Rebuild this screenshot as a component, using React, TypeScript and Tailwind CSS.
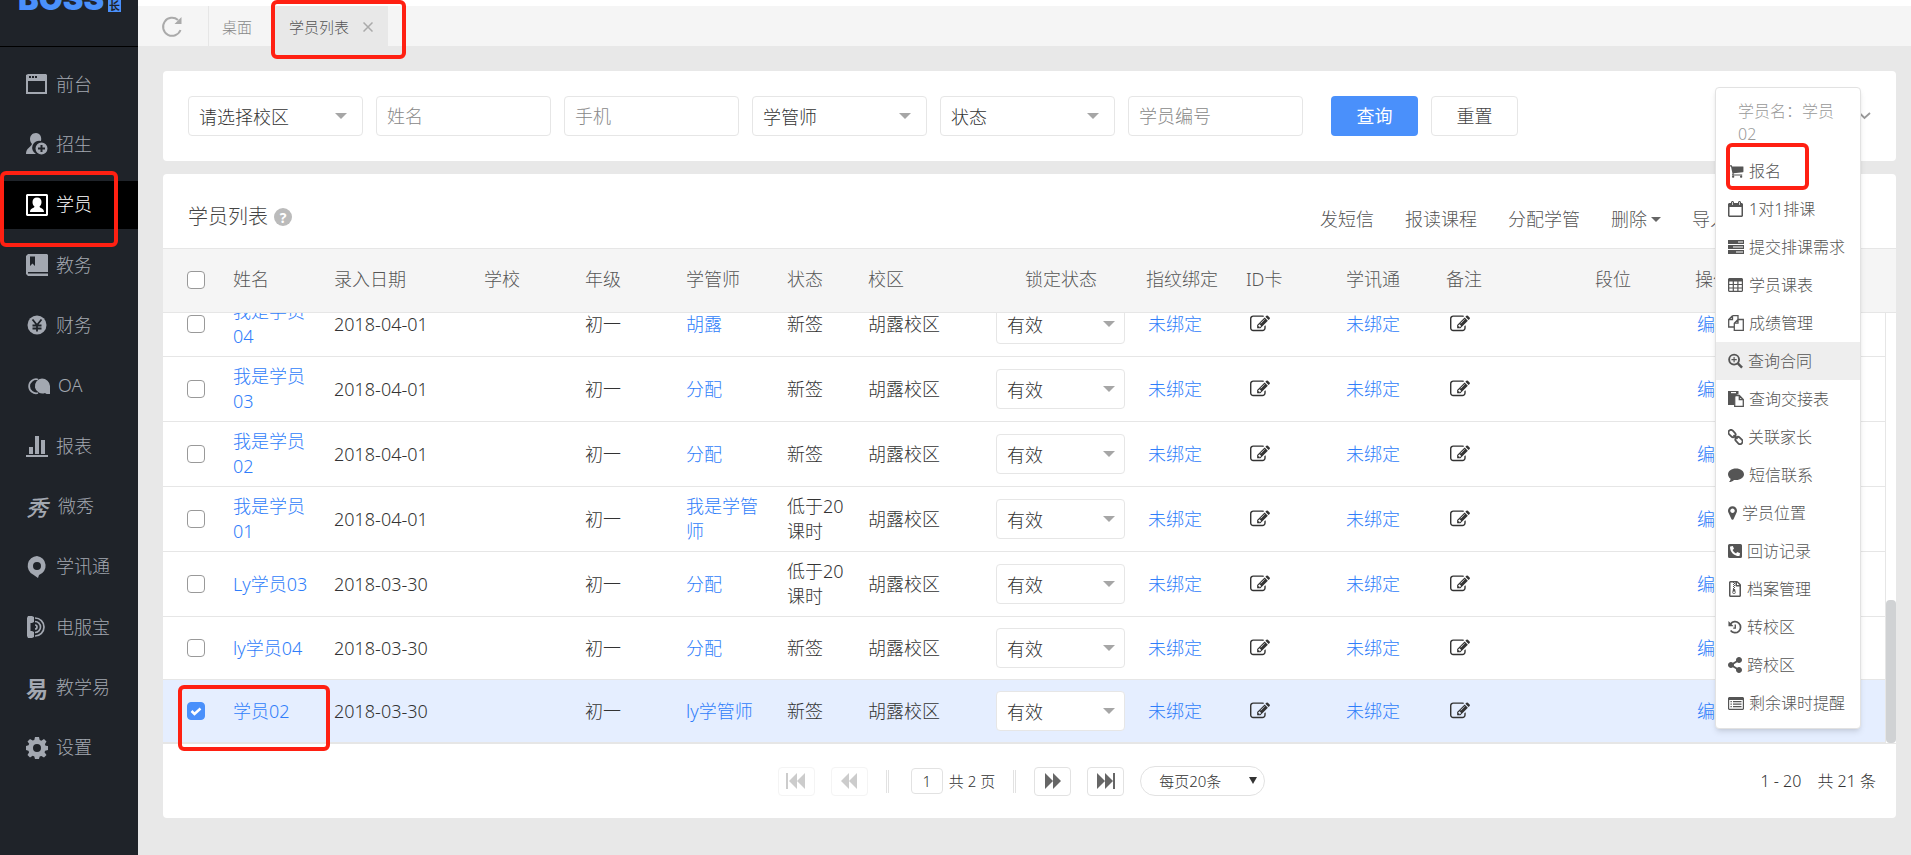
import type { ReactNode } from "react";
import { useState } from "react";
import { FaPhoneSquareAlt, FaShareAlt, FaRegFileArchive } from "react-icons/fa";

type NavItem = { label: string; icon: ReactNode };

type Student = {
  name: string;
  date: string;
  tutor: string;
  status: string;
};

const EDIT_PATH =
  "M888 1184l116-116-152-152-116 116v56h96v96h56zm440-720q-16-16-33 1l-350 350q-17 17-1 33t33-1l350-350q17-17 1-33zm80 594v190q0 119-84.5 203.5t-203.5 84.5h-832q-119 0-203.5-84.5t-84.5-203.5v-832q0-119 84.5-203.5t203.5-84.5h832q63 0 117 25 15 7 18 23 3 17-9 29l-49 49q-14 14-32 8-23-6-45-6h-832q-66 0-113 47t-47 113v832q0 66 47 113t113 47h832q66 0 113-47t47-113v-126q0-13 9-22l64-64q15-15 35-7t20 29zm-96-738l288 288-672 672h-288v-288zm444 132l-92 92-288-288 92-92q28-28 68-28t68 28l152 152q28 28 28 68t-28 68z";

const CART_PATH =
  "M704 1536q0 52-38 90t-90 38-90-38-38-90 38-90 90-38 90 38 38 90zm896 0q0 52-38 90t-90 38-90-38-38-90 38-90 90-38 90 38 38 90zm128-1088v512q0 24-16.5 42.5t-40.5 21.5l-1044 122q13 60 13 70 0 16-24 64h920q26 0 45 19t19 45-19 45-45 19h-1024q-26 0-45-19t-19-45q0-11 8-31.5t16-36 21.5-40 15.5-29.5l-177-823h-204q-26 0-45-19t-19-45 19-45 45-19h256q16 0 28.5 6.5t19.5 15.5 13 24.5 8 26 5.5 29.5 4.5 26h1201q26 0 45 19t19 45z";

const PIN_PATH =
  "M1152 640q0-106-75-181t-181-75-181 75-75 181 75 181 181 75 181-75 75-181zm256 0q0 109-33 179l-364 774q-16 33-47.5 52t-67.5 19-67.5-19-46.5-52l-365-774q-33-70-33-179 0-212 150-362t362-150 362 150 150 362z";

// navigation icons, 22px grid
function NavIcon({ children }: { children: ReactNode }) {
  return (
    <svg viewBox="0 0 22 22" className="h-[22px] w-[22px] shrink-0" fill="currentColor" aria-hidden="true">
      {children}
    </svg>
  );
}

const navItems: NavItem[] = [
  {
    label: "前台",
    icon: (
      <NavIcon>
        <path fillRule="evenodd" d="M2 1h18l1 1v19H0V2zM2 8v11h17V8zM3 3v2h2V3zm3 0v2h2V3zm3 0v2h2V3z" />
      </NavIcon>
    ),
  },
  {
    label: "招生",
    icon: (
      <NavIcon>
        <path d="M10 0c-4 0-6 3-6 6 0 2 1 4 2 5-1 3-6 4-6 10h10a7 7 0 0 1 5-13c1-4-1-8-5-8z" />
        <path fillRule="evenodd" d="M15.500 9.500a6 6 0 1 0 0 12 6 6 0 0 0 0-12zM14.500 12h2v2.500H19v2h-2.500V19h-2v-2.500H12v-2h2.500z" />
      </NavIcon>
    ),
  },
  {
    label: "学员",
    icon: (
      <NavIcon>
        <path fillRule="evenodd" d="M1 0h20l1 1v20l-1 1H1l-1-1V1zm1 2v18h18V2z" />
        <path d="M11 3.500c-3 0-4.500 2-4.500 4.500 0 2 .8 3.500 2 4.500-.5 2-4.500 1.500-4.500 5.500h14c0-4-4-3.500-4.500-5.500 1.200-1 2-2.500 2-4.500 0-2.500-1.500-4.500-4.500-4.500z" />
      </NavIcon>
    ),
  },
  {
    label: "教务",
    icon: (
      <NavIcon>
        <path fillRule="evenodd" d="M2 0h19l1 1v17H2v1.500h20V22H2l-2-2V2zM4 2.500v9.500l2.500-2.500L9 12V2.500z" />
      </NavIcon>
    ),
  },
  {
    label: "财务",
    icon: (
      <NavIcon>
        <circle cx="11" cy="11" r="9.500" />
        <path d="M6.500 5.500 11 11l4.500-5.500M11 11v6.500M6.500 11.500h9M6.500 14.500h9" fill="none" stroke="#1f2329" strokeWidth="1.800" />
      </NavIcon>
    ),
  },
  {
    label: "OA",
    icon: (
      <svg viewBox="0 0 24 22" className="h-[22px] w-6 shrink-0" aria-hidden="true">
        <path d="M12 4.500A7 7 0 1 0 12 18" fill="none" stroke="currentColor" strokeWidth="1.800" />
        <path d="M16 3.500a7.500 7.500 0 1 0 3 14.500c.8 1 2 1 5 1V11a8 8 0 0 0-8-7.500z" fill="currentColor" />
      </svg>
    ),
  },
  {
    label: "报表",
    icon: (
      <NavIcon>
        <path d="M3 12h4v7H3zM9 1h4v18H9zm6 4h4v14h-4zM0 20h22v2H0z" />
      </NavIcon>
    ),
  },
  { label: "微秀", icon: <span className="w-6 text-[22px] leading-6 font-medium italic" aria-hidden="true">秀</span> },
  {
    label: "学讯通",
    icon: (
      <NavIcon>
        <path fillRule="evenodd" d="M11 0a9.800 9.800 0 0 0-4 18.500L12 22l1-3a9.800 9.800 0 0 0-2-19zm0 6a4 4 0 1 1 0 8 4 4 0 0 1 0-8z" />
      </NavIcon>
    ),
  },
  {
    label: "电服宝",
    icon: (
      <NavIcon>
        <path d="M2 0h4l2 1v5l-2 1H4.500v8H6l2 1v5l-2 1H2l-1-2V2z" />
        <path d="M9 2a9 9 0 0 1 0 18M9 5.500a5.500 5.500 0 0 1 0 11M9 9a2 2 0 0 1 0 4" fill="none" stroke="currentColor" strokeWidth="1.700" />
      </NavIcon>
    ),
  },
  { label: "教学易", icon: <span className="w-[22px] text-[22px] leading-6 font-bold" aria-hidden="true">易</span> },
  {
    label: "设置",
    icon: (
      <NavIcon>
        <path
          fillRule="evenodd"
          d="M9 0h4l.7 3 1.600.7L18 2l2.500 2.500-1.600 2.700.7 1.600L22 9v4l-2.800.7-.7 1.600L20.500 18 18 20.500l-2.700-1.600-1.600.7L13 22H9l-.7-2.500-1.600-.7L4 20.500 1.500 18l1.600-2.700-.7-1.600L0 13V9l2.500-.7.7-1.600L1.500 4.500 4 2l2.700 1.600L8.300 3zm2 7a4 4 0 1 0 0 8 4 4 0 0 0 0-8z"
        />
      </NavIcon>
    ),
  },
];

const students: Student[] = [
  { name: "我是学员04", date: "2018-04-01", tutor: "胡露", status: "新签" },
  { name: "我是学员03", date: "2018-04-01", tutor: "分配", status: "新签" },
  { name: "我是学员02", date: "2018-04-01", tutor: "分配", status: "新签" },
  { name: "我是学员01", date: "2018-04-01", tutor: "我是学管师", status: "低于20课时" },
  { name: "Ly学员03", date: "2018-03-30", tutor: "分配", status: "低于20课时" },
  { name: "ly学员04", date: "2018-03-30", tutor: "分配", status: "新签" },
  { name: "学员02", date: "2018-03-30", tutor: "ly学管师", status: "新签" },
];

const headers = ["姓名", "录入日期", "学校", "年级", "学管师", "状态", "校区", "锁定状态", "指纹绑定", "ID卡", "学讯通", "备注", "段位", "操作"];

function Glyph({ d, className }: { d: string; className: string }) {
  return (
    <svg viewBox="0 0 1792 1792" className={className} fill="currentColor" aria-hidden="true">
      <path d={d} />
    </svg>
  );
}

function MenuGlyph({ children, className = "w-4" }: { children: ReactNode; className?: string }) {
  return (
    <svg viewBox="0 0 16 16" className={`h-4 shrink-0 ${className}`} fill="currentColor" aria-hidden="true">
      {children}
    </svg>
  );
}

const menuItems: NavItem[] = [
  { label: "报名", icon: <Glyph d={CART_PATH} className="h-4 w-4 shrink-0" /> },
  {
    label: "1对1排课",
    icon: (
      <MenuGlyph>
        <path fillRule="evenodd" d="M3 2V1l1-1h1l1 1v1h4V1l1-1h1l1 1v1h1l1 1v12l-1 1H1l-1-1V3l1-1zM1.500 6v8.500h12V6z" />
        <path d="M4.500 1v3M11.500 1v3" stroke="#fff" strokeWidth=".7" />
      </MenuGlyph>
    ),
  },
  {
    label: "提交排课需求",
    icon: (
      <MenuGlyph>
        <path d="M0 1h16v4H0zM0 6h16v4H0zM0 11h16v4H0z" />
        <path d="M10 2.500h5v1h-5zM5 7.500h10v1H5zM8 12.500h7v1H8z" fill="#fff" />
      </MenuGlyph>
    ),
  },
  {
    label: "学员课表",
    icon: (
      <MenuGlyph>
        <path
          fillRule="evenodd"
          d="M1 1h13l1 1v12l-1 1H1l-1-1V2zm.3 3.500V7h3.400V4.500zm4.600 0V7h3.400V4.500zm4.600 0V7h3.300V4.500zM1.300 8v2.500h3.400V8zm4.600 0v2.500h3.400V8zm4.600 0v2.500h3.300V8zM1.300 11.500v2.300h3.400v-2.300zm4.600 0v2.300h3.400v-2.300zm4.600 0v2.300h3.300v-2.300z"
        />
      </MenuGlyph>
    ),
  },
  {
    label: "成绩管理",
    icon: (
      <MenuGlyph>
        <path d="M4.500.7H10v4M4.500.7.700 4.500V12h5.500M4.500.7v3.800H.7M10 4.500h5.300v10.800h-9V8.200zM10 4.500v3.700H6.300" fill="none" stroke="currentColor" strokeWidth="1.300" />
      </MenuGlyph>
    ),
  },
  {
    label: "查询合同",
    icon: (
      <MenuGlyph className="w-[15px]">
        <circle cx="6.500" cy="6.500" r="5.300" fill="none" stroke="currentColor" strokeWidth="2" />
        <path d="m10.500 10.500 4.500 4.500" stroke="currentColor" strokeWidth="2.600" />
        <path d="M6.500 3.700v5.600M3.700 6.500h5.600" stroke="currentColor" strokeWidth="1.200" />
      </MenuGlyph>
    ),
  },
  {
    label: "查询交接表",
    icon: (
      <MenuGlyph>
        <path d="M0 0h10.500v3.500H9L6 7v7H0z" />
        <path d="M3 1h5v1.200H3z" fill="#fff" />
        <path d="M6.700 4.500h4.600l4 4v6.800H6.700zM11.300 4.500v4h4" fill="none" stroke="currentColor" strokeWidth="1.300" />
      </MenuGlyph>
    ),
  },
  {
    label: "关联家长",
    icon: (
      <MenuGlyph className="w-[15px]">
        <g fill="none" stroke="currentColor" strokeWidth="1.900" transform="rotate(45 8 8)">
          <rect x="-1.500" y="5.300" width="8.500" height="5.400" rx="2.700" />
          <rect x="9" y="5.300" width="8.500" height="5.400" rx="2.700" />
          <path d="M5 8h6" />
        </g>
      </MenuGlyph>
    ),
  },
  {
    label: "短信联系",
    icon: (
      <MenuGlyph>
        <path d="M8 1.500c4.500 0 8 2.600 8 5.800s-3.500 5.800-8 5.800l-2-.2C4.500 14.200 3 15 1 15c1-1 1.500-2 1.600-3.200C1 10.800 0 9.200 0 7.300c0-3.200 3.500-5.800 8-5.800z" />
      </MenuGlyph>
    ),
  },
  {
    label: "学员位置",
    icon: (
      <svg viewBox="384 0 1024 1792" className="h-4 w-[9px] shrink-0" fill="currentColor" aria-hidden="true">
        <path d={PIN_PATH} />
      </svg>
    ),
  },
  { label: "回访记录", icon: <FaPhoneSquareAlt className="h-4 w-[14px] shrink-0" /> },
  { label: "档案管理", icon: <FaRegFileArchive className="h-4 w-[14px] shrink-0" /> },
  {
    label: "转校区",
    icon: (
      <MenuGlyph className="w-[14px]">
        <path d="M3 4.500A6.300 6.300 0 1 1 3 12" fill="none" stroke="currentColor" strokeWidth="2" />
        <path d="M.5 1v6h6zM7.500 5h1.600v5H6V8.500h1.500z" />
      </MenuGlyph>
    ),
  },
  { label: "跨校区", icon: <FaShareAlt className="h-4 w-[14px] shrink-0" /> },
  {
    label: "剩余课时提醒",
    icon: (
      <MenuGlyph>
        <path fillRule="evenodd" d="M1 2h14l1 1v11l-1 1H1l-1-1V3zm.2 3v8.800h13.600V5z" />
        <path d="M2.500 6h1.300v1.200H2.500zm2.500 0h8.500v1.200H5zM2.500 8.500h1.300v1.200H2.500zm2.500 0h8.500v1.200H5zM2.500 11h1.300v1.200H2.500zM5 11h8.500v1.200H5z" />
      </MenuGlyph>
    ),
  },
];

function Marker({ className }: { className: string }) {
  return <div className={`pointer-events-none absolute z-30 rounded-md border-4 border-[#ff2012] ${className}`} />;
}

function SelectBox({ label, className }: { label: string; className: string }) {
  return (
    <div className={`relative h-10 ${className}`}>
      <select
        aria-label={label}
        className="h-full w-full appearance-none rounded border border-[#e6e6e6] bg-white pt-0.5 pl-2.5 text-[18px] text-[#333]"
      >
        <option>{label}</option>
      </select>
      <span className="pointer-events-none absolute top-[17px] right-4 border-x-[6px] border-t-[6px] border-x-transparent border-t-[#a6a6a6]" />
    </div>
  );
}

function TextBox({ label }: { label: string }) {
  return (
    <input
      type="text"
      aria-label={label}
      placeholder={label}
      className="h-10 w-[175px] rounded border border-[#e6e6e6] bg-white px-2.5 text-[18px] placeholder:text-[#888]"
    />
  );
}

function CheckBox({ label, checked, onChange }: { label: string; checked: boolean; onChange: () => void }) {
  return (
    <span className="relative ml-6 block h-[18px] w-[18px]">
      <input
        type="checkbox"
        aria-label={label}
        checked={checked}
        onChange={onChange}
        className="block h-[18px] w-[18px] appearance-none rounded border border-[#999] bg-white checked:border-[#4a90fb] checked:bg-[#4a90fb]"
      />
      {checked && (
        <svg viewBox="0 0 18 18" className="pointer-events-none absolute inset-0" fill="none" stroke="#fff" strokeWidth="2.500" aria-hidden="true">
          <path d="m4.500 9 3 3 6-5.500" />
        </svg>
      )}
    </span>
  );
}

function PageButton({ label, d, disabled = false }: { label: string; d: string; disabled?: boolean }) {
  return (
    <button
      type="button"
      aria-label={label}
      disabled={disabled}
      className="flex h-[29px] w-[37px] items-center justify-center rounded border border-[#e2e2e2] text-[#666] disabled:border-[#f4f4f4] disabled:text-[#ccc]"
    >
      <svg viewBox="0 0 20 16" className="h-4 w-5" fill="currentColor" aria-hidden="true">
        <path d={d} />
      </svg>
    </button>
  );
}

function Columns() {
  return (
    <colgroup>
      <col className="w-[60px]" />
      <col className="w-[101px]" />
      <col className="w-[150px]" />
      <col className="w-[101px]" />
      <col className="w-[101px]" />
      <col className="w-[101px]" />
      <col className="w-[81px]" />
      <col className="w-[128px]" />
      <col className="w-[150px]" />
      <col className="w-[100px]" />
      <col className="w-[100px]" />
      <col className="w-[100px]" />
      <col className="w-[149px]" />
      <col className="w-[100px]" />
      <col />
    </colgroup>
  );
}

function Sidebar() {
  return (
    <aside className="w-[138px] shrink-0 bg-[#1f2329] text-[#a3a8b1]">
      <div className="h-[47px] overflow-hidden border-b border-black">
        <div className="-mt-[21px] flex items-end gap-1 pl-[18px] text-[#4a90fb]">
          <span className="font-[Inter] text-[31px] leading-10 font-black">BOSS</span>
          <span className="mb-[7px] w-[13px] bg-[#4a90fb] text-center text-[11px] leading-3 font-bold text-[#1f2329]">校长</span>
        </div>
      </div>
      <nav className="mt-[13px] flex h-[712px] flex-col justify-between text-[18px]">
        {navItems.map((item) => {
          const active = item.label === "学员";
          return (
            <div key={item.label} className="relative">
              <a
                href="#"
                className={`flex h-12 items-center gap-2 border-l-4 pl-[22px] ${
                  active ? "border-[#4a6fb5] bg-black text-white" : "border-transparent"
                }`}
              >
                {item.icon}
                <span>{item.label}</span>
              </a>
              {active && <Marker className="-top-[10px] left-0 h-[76px] w-[118px]" />}
            </div>
          );
        })}
      </nav>
    </aside>
  );
}

function TabBar() {
  return (
    <div className="flex h-[46px] border-t-[6px] border-white bg-[#f5f5f5] text-[15px]">
      <button type="button" aria-label="刷新" className="flex w-[71px] items-center border-r border-[#e6e6e6] pt-0.5 pl-[23px] text-[#aaa]">
        <svg viewBox="0 0 22 22" className="h-[22px] w-[22px]" fill="none" stroke="currentColor" strokeWidth="2" aria-hidden="true">
          <path d="M17 4A9 9 0 1 0 19.500 14" />
          <path d="M20.500 1v7h-7z" fill="currentColor" stroke="none" />
        </svg>
      </button>
      <a href="#" className="flex w-[66px] items-center pt-0.5 pl-[13px] text-[#888]">桌面</a>
      <div className="relative flex w-[113px] items-center gap-[14px] bg-[#e8e8e8] pt-0.5 pl-[14px]">
        <a href="#" className="text-[#555]">学员列表</a>
        <button type="button" aria-label="关闭" className="text-[#aaa]">
          <svg viewBox="0 0 10 10" className="h-[10px] w-[10px]" stroke="currentColor" strokeWidth="1.500" aria-hidden="true">
            <path d="m0.500 0.500 9 9m0-9-9 9" />
          </svg>
        </button>
        <Marker className="-top-[6px] -left-1 h-[59px] w-[135px]" />
      </div>
    </div>
  );
}

function StudentMenu() {
  return (
    <div className="absolute top-[87px] right-[50px] z-20 w-[146px] rounded border border-[#e2e2e2] bg-white pb-1.5 text-[16px] text-[#555] shadow-md">
      <p className="px-[22px] pt-3 pb-1.5 leading-[23px] text-[#999]">学员名：学员02</p>
      <ul>
        {menuItems.map((item) => (
          <li key={item.label} className="relative">
            <button
              type="button"
              className={`flex h-[38px] w-full items-center gap-[5px] pl-3 whitespace-nowrap ${item.label === "查询合同" ? "bg-[#eee]" : ""}`}
            >
              {item.icon}
              {item.label}
            </button>
            {item.label === "报名" && <Marker className="-top-[9px] left-[10px] h-[47px] w-[83px]" />}
          </li>
        ))}
      </ul>
    </div>
  );
}

export default function App() {
  const [selected, setSelected] = useState<string[]>(["学员02"]);

  function toggle(name: string) {
    setSelected((prev) => (prev.includes(name) ? prev.filter((n) => n !== name) : [...prev, name]));
  }

  return (
    <div className="relative flex min-h-screen bg-[#e8e8e8] font-['Noto_Sans','Noto_Sans_CJK_SC',sans-serif] font-light text-[#333]">
      <Sidebar />

      <div className="min-w-0 flex-1">
        <TabBar />

        <main className="flex flex-col gap-[13px] pt-[25px] pr-[15px] pl-[25px]">
          <form className="flex items-center gap-7 rounded bg-white p-[25px] text-[18px]">
            <div className="flex gap-[13px]">
              <SelectBox label="请选择校区" className="w-[175px]" />
              <TextBox label="姓名" />
              <TextBox label="手机" />
              <SelectBox label="学管师" className="w-[175px]" />
              <SelectBox label="状态" className="w-[175px]" />
              <TextBox label="学员编号" />
            </div>
            <div className="flex gap-[13px]">
              <button type="button" className="h-10 w-[87px] rounded bg-[#4a90fb] font-normal text-white">查询</button>
              <button type="button" className="h-10 w-[87px] rounded border border-[#e6e6e6] text-[#444]">重置</button>
            </div>
            <button type="button" aria-label="展开" className="ml-auto text-[#999]">
              <svg viewBox="0 0 12 8" className="h-2 w-3" fill="none" stroke="currentColor" strokeWidth="1.800" aria-hidden="true">
                <path d="m1 1.500 4.500 4.500L11 1" />
              </svg>
            </button>
          </form>

          <section className="rounded bg-white">
            <div className="flex h-[74px] items-center justify-between pt-3 pr-[168px] pl-[25px]">
              <div className="flex items-center gap-1.5">
                <h1 className="text-[20px] text-[#444]">学员列表</h1>
                <span className="flex h-[18px] w-[18px] items-center justify-center rounded-full bg-[#bbb] text-[14px] font-bold text-white">?</span>
              </div>
              <div className="flex items-center gap-[31px] pt-1 text-[18px] text-[#555]">
                <button type="button">发短信</button>
                <button type="button">报读课程</button>
                <button type="button">分配学管</button>
                <button type="button" className="flex items-center gap-1">
                  删除
                  <span className="border-x-[5px] border-t-[5px] border-x-transparent border-t-[#666]" />
                </button>
                <button type="button">导入</button>
              </div>
            </div>

            <table className="w-full table-fixed border-separate border-spacing-0 bg-[#f5f5f5] text-[18px] text-[#555]">
              <Columns />
              <thead>
                <tr>
                  <th className="h-[65px] border-y border-[#e6e6e6] pb-0.5">
                    <CheckBox label="全选" checked={false} onChange={() => setSelected(students.map((s) => s.name))} />
                  </th>
                  {headers.map((h) => (
                    <th
                      key={h}
                      className={`border-y border-[#e6e6e6] px-2.5 pb-0.5 font-light ${h === "锁定状态" ? "text-center" : "text-left"}`}
                    >
                      {h}
                    </th>
                  ))}
                </tr>
              </thead>
            </table>

            <div className="relative">
              <div className="flex h-[431px] items-end overflow-hidden border-b border-[#e6e6e6]">
                <table className="min-w-0 flex-1 table-fixed border-separate border-spacing-0 text-[18px] leading-[25px]">
                  <Columns />
                  <tbody>
                    {students.map((s) => {
                      const checked = selected.includes(s.name);
                      return (
                        <tr
                          key={s.name}
                          className={`[&>td]:h-[63px] [&>td]:border-b [&>td]:border-[#e6e6e6] [&>td]:py-[7px] ${checked ? "bg-[#e5eeff]" : ""}`}
                        >
                          <td>
                            <CheckBox label={s.name} checked={checked} onChange={() => toggle(s.name)} />
                          </td>
                          <td className="px-2.5">
                            <a href="#" className="text-[#2f7dfa]">{s.name}</a>
                          </td>
                          <td className="px-2.5">{s.date}</td>
                          <td />
                          <td className="px-2.5">初一</td>
                          <td className="px-2.5">
                            <a href="#" className="text-[#2f7dfa]">{s.tutor}</a>
                          </td>
                          <td className="px-2.5">{s.status}</td>
                          <td className="px-2.5">胡露校区</td>
                          <td className="px-2.5">
                            <SelectBox label="有效" className="w-[129px] [&>span]:right-[10px]" />
                          </td>
                          <td className="px-3">
                            <a href="#" className="text-[#2f7dfa]">未绑定</a>
                          </td>
                          <td className="px-[14px]">
                            <button type="button" aria-label="编辑ID卡" className="block">
                              <Glyph d={EDIT_PATH} className="h-5 w-5" />
                            </button>
                          </td>
                          <td className="px-2.5">
                            <a href="#" className="text-[#2f7dfa]">未绑定</a>
                          </td>
                          <td className="px-[14px]">
                            <button type="button" aria-label="编辑备注" className="block">
                              <Glyph d={EDIT_PATH} className="h-5 w-5" />
                            </button>
                          </td>
                          <td />
                          <td className="px-3">
                            <a href="#" className="text-[#2f7dfa]">编辑</a>
                          </td>
                        </tr>
                      );
                    })}
                  </tbody>
                </table>
                <div className="flex w-[11px] shrink-0 flex-col justify-end self-stretch border-l border-[#e6e6e6]">
                  <div className="h-[143px] rounded bg-[#d0d2d4]" />
                </div>
              </div>
              <Marker className="-bottom-[7px] left-[15px] h-[66px] w-[152px]" />
            </div>

            <div className="grid h-[74px] grid-cols-[1fr_auto_1fr] items-center text-[15px]">
              <div className="col-start-2 mr-4 flex items-center">
                <PageButton label="首页" disabled d="M0 0h2v16H0zM11 0v16L3 8zM19 0v16l-8-8z" />
                <span className="w-4" />
                <PageButton label="上一页" disabled d="M10 0v16L2 8zM18 0v16l-8-8z" />
                <span className="mr-[22px] ml-[18px] h-[23px] w-[3px] border-x border-[#e2e2e2]" />
                <input
                  type="text"
                  aria-label="页码"
                  defaultValue="1"
                  className="mr-1.5 h-[26px] w-8 rounded border border-[#e2e2e2] text-center"
                />
                <span>共 2 页</span>
                <span className="mr-[18px] ml-[18px] h-[23px] w-[3px] border-x border-[#e2e2e2]" />
                <PageButton label="下一页" d="M2 0v16l8-8zM10 0v16l8-8z" />
                <span className="w-4" />
                <PageButton label="末页" d="M1 0v16l8-8zM9 0v16l8-8zM17 0h2v16h-2z" />
                <span className="w-4" />
                <div className="relative h-[30px] w-[125px]">
                  <select
                    aria-label="每页条数"
                    className="h-full w-full appearance-none rounded-full border border-[#e2e2e2] bg-white pl-[18px] text-[15px]"
                  >
                    <option>每页20条</option>
                  </select>
                  <span className="pointer-events-none absolute top-[11px] right-2 border-x-4 border-t-[7px] border-x-transparent border-t-[#333]" />
                </div>
              </div>
              <p className="flex justify-end gap-4 pr-5 text-[16px]">
                <span>1 - 20</span>
                <span>共 21 条</span>
              </p>
            </div>
          </section>
        </main>
      </div>

      <StudentMenu />
    </div>
  );
}
